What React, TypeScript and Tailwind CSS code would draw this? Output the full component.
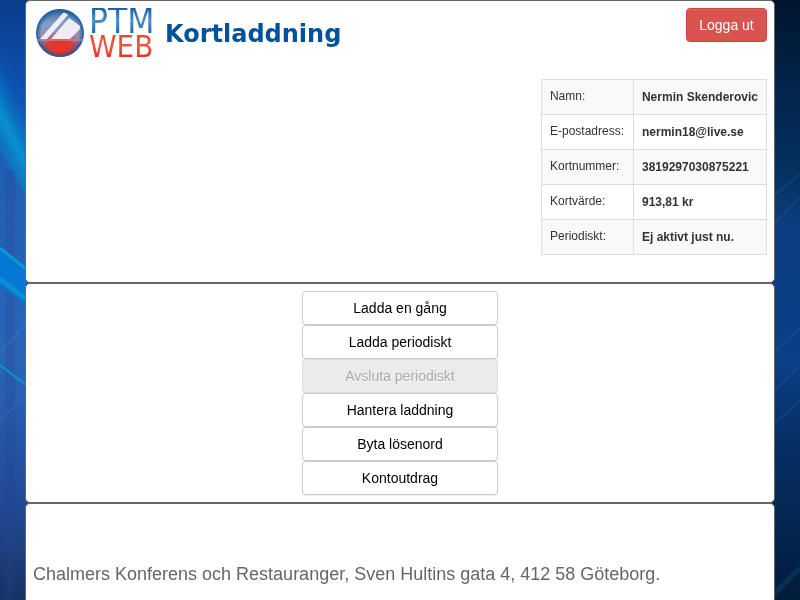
const account = [
  { label: 'Namn:', value: 'Nermin Skenderovic' },
  { label: 'E-postadress:', value: 'nermin18@live.se' },
  { label: 'Kortnummer:', value: '3819297030875221' },
  { label: 'Kortvärde:', value: '913,81 kr' },
  { label: 'Periodiskt:', value: 'Ej aktivt just nu.' },
];

const actions = [
  { label: 'Ladda en gång' },
  { label: 'Ladda periodiskt' },
  { label: 'Avsluta periodiskt', disabled: true },
  { label: 'Hantera laddning' },
  { label: 'Byta lösenord' },
  { label: 'Kontoutdrag' },
];

function Backdrop() {
  return (
    <svg
      className="fixed inset-0 -z-10 h-full w-full"
      viewBox="0 0 800 600"
      preserveAspectRatio="none"
      aria-hidden="true"
    >
      <defs>
        <linearGradient id="left" x1="0" y1="0" x2="0" y2="1">
          <stop offset="0" stopColor="#0b3d8c" />
          <stop offset="0.15" stopColor="#0d50ae" />
          <stop offset="0.3" stopColor="#2260b4" />
          <stop offset="0.6" stopColor="#2a66b6" />
          <stop offset="0.78" stopColor="#2450a0" />
          <stop offset="0.9" stopColor="#1e4384" />
          <stop offset="1" stopColor="#143260" />
        </linearGradient>
        <linearGradient id="right" x1="0" y1="0" x2="0" y2="1">
          <stop offset="0" stopColor="#01142f" />
          <stop offset="0.15" stopColor="#02254c" />
          <stop offset="0.28" stopColor="#04305f" />
          <stop offset="0.38" stopColor="#0c3d80" />
          <stop offset="0.6" stopColor="#0b3f86" />
          <stop offset="0.72" stopColor="#07306a" />
          <stop offset="0.85" stopColor="#032954" />
          <stop offset="1" stopColor="#021c3c" />
        </linearGradient>
        <linearGradient id="beam" gradientUnits="userSpaceOnUse" x1="-22" y1="134" x2="26" y2="110">
          <stop offset="0" stopColor="#0a6cc4" stopOpacity="0.2" />
          <stop offset="0.55" stopColor="#0891cf" />
          <stop offset="1" stopColor="#0868c8" stopOpacity="0.1" />
        </linearGradient>
      </defs>
      <rect width="400" height="600" fill="url(#left)" />
      <rect x="400" width="400" height="600" fill="url(#right)" />
      <path d="M0 40L26 96V196L0 150Z" fill="url(#beam)" />
      <rect x="5" y="170" width="10" height="430" fill="#263f90" opacity="0.25" />
      <path d="M0 248L26 270V304L0 286Z" fill="#0577d4" />
      <path d="M0 248L26 269" stroke="#0a98d2" strokeWidth="3" />
      <path d="M0 279L26 299" stroke="#0a8fd2" strokeWidth="5" />
      <path d="M0 365L26 385" stroke="#0a94d0" strokeWidth="2" />
      <path d="M0 351L26 325M0 420L26 395" stroke="#6a9fd2" strokeOpacity="0.35" />
      <path
        d="M774 196L800 174M774 224L800 198M774 352L800 328M774 392L800 366M774 424L800 400"
        stroke="#2c65aa"
        strokeOpacity="0.25"
        strokeWidth="2"
      />
      <path d="M774 594L800 568" stroke="#0e4a74" strokeOpacity="0.4" strokeWidth="5" />
    </svg>
  );
}

function Logo() {
  return (
    <div className="flex gap-1">
      <svg width="50" height="50" viewBox="0 0 50 50" aria-hidden="true">
        <defs>
          <linearGradient id="ball" x1="0" y1="0" x2="0" y2="1">
            <stop offset="0" stopColor="#2a62a2" />
            <stop offset="0.3" stopColor="#7f9dc6" />
            <stop offset="0.6" stopColor="#9d8fae" />
            <stop offset="1" stopColor="#54518a" />
          </linearGradient>
          <radialGradient id="glow" cx="0.5" cy="0.6" r="0.5">
            <stop offset="0" stopColor="#f5301f" />
            <stop offset="0.5" stopColor="#e0352e" stopOpacity="0.95" />
            <stop offset="1" stopColor="#b0404f" stopOpacity="0" />
          </radialGradient>
          <radialGradient id="rim" cx="0.5" cy="0.5" r="0.5">
            <stop offset="0.78" stopColor="#1a5a9e" stopOpacity="0" />
            <stop offset="1" stopColor="#1a5a9e" />
          </radialGradient>
          <clipPath id="disc">
            <circle cx="25" cy="25" r="24" />
          </clipPath>
        </defs>
        <g clipPath="url(#disc)">
          <rect width="50" height="50" fill="url(#ball)" />
          <ellipse cx="25" cy="38" rx="25" ry="19" fill="url(#glow)" />
          <circle cx="25" cy="25" r="24" fill="url(#rim)" />
          <path d="M5 31L28 5Q30 4 33 7L12 31Z" fill="#f1edf4" />
          <path d="M16 31L34 10L45 18V21L35 31Z" fill="#f1edf4" />
          <path d="M1 32H49" stroke="#d9a9ae" strokeOpacity="0.7" />
        </g>
      </svg>
      <div className="flex w-16 flex-col font-['DejaVu_Sans_Condensed','DejaVu_Sans',sans-serif]">
        <span className="bg-linear-to-b from-[#1560a6] via-[#4a90c8] to-[#1263a8] bg-clip-text text-[35px] leading-[26px] text-transparent">
          PTM
        </span>
        <span className="bg-linear-to-b from-[#e8483c] via-[#ee5545] to-[#e8261d] bg-clip-text text-[31px] leading-[25px] text-transparent">
          WEB
        </span>
      </div>
    </div>
  );
}

export default function App() {
  return (
    <div className="relative isolate flex min-h-screen flex-col px-[25px] font-['Liberation_Sans',Arial,sans-serif] text-sm text-[#333]">
      <Backdrop />
      <header className="flex items-start justify-between rounded-[5px] border border-[#666] bg-white px-[7px] pt-[7px] pb-[27px]">
        <div className="flex gap-3 pl-[2px]">
          <Logo />
          <h1 className="pt-[10px] font-['DejaVu_Sans',Verdana,sans-serif] text-2xl font-bold text-[#00529b]">
            Kortladdning
          </h1>
        </div>
        <div className="flex flex-col items-end gap-[37px]">
          <button
            type="button"
            className="h-[34px] w-[81px] rounded border border-[#d43f3a] bg-[#d9534f] text-sm text-white shadow-[inset_0_1px_0_rgba(255,255,255,0.15)]"
          >
            Logga ut
          </button>
          <table className="border-collapse text-xs">
            <tbody>
              {account.map((row) => (
                <tr key={row.label} className="h-[35px] odd:bg-[#f9f9f9] even:bg-white">
                  <th scope="row" className="w-[92px] border border-[#ddd] px-2 pb-[2px] text-left font-normal">
                    {row.label}
                  </th>
                  <td className="border border-[#ddd] px-2 font-bold">{row.value}</td>
                </tr>
              ))}
            </tbody>
          </table>
        </div>
      </header>
      <nav className="flex flex-col items-center rounded-[5px] border border-[#666] bg-white py-[7px]">
        {actions.map((action) => (
          <button
            key={action.label}
            type="button"
            disabled={action.disabled}
            className="h-[34px] w-[196px] rounded border border-[#ccc] bg-white text-sm text-black shadow-[0_1px_1px_rgba(0,0,0,0.08)] disabled:border-[#ddd] disabled:bg-[#ebebeb] disabled:text-[#aaa] disabled:[text-shadow:0_1px_0_#fff]"
          >
            {action.label}
          </button>
        ))}
      </nav>
      <footer className="flex-1 rounded-t-[5px] border border-b-0 border-[#666] bg-white px-[7px] pt-14 text-lg text-[#666]">
        <p>Chalmers Konferens och Restauranger, Sven Hultins gata 4, 412 58 Göteborg.</p>
      </footer>
    </div>
  );
}
